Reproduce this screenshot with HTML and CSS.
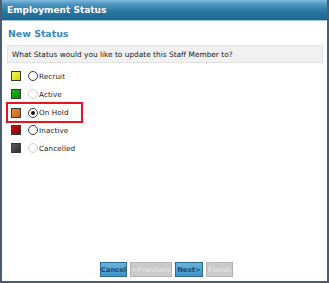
FILE: index.html
```html
<!DOCTYPE html>
<html>
<head>
<meta charset="utf-8">
<link rel="stylesheet" href="styles.css">
</head>
<body>
<div class="window">
  <div class="titlebar">Employment Status</div>
  <div class="content">
    <div class="section-title">New Status</div>
    <div class="question">What Status would you like to update this Staff Member to?</div>
    <div class="options">
      <div class="option">
        <span class="swatch yellow"></span>
        <span class="radio"></span>
        <span class="label">Recruit</span>
      </div>
      <div class="option">
        <span class="swatch green"></span>
        <span class="radio disabled"></span>
        <span class="label">Active</span>
      </div>
      <div class="option highlighted">
        <span class="swatch orange"></span>
        <span class="radio checked"></span>
        <span class="label">On Hold</span>
      </div>
      <div class="option">
        <span class="swatch red"></span>
        <span class="radio"></span>
        <span class="label">Inactive</span>
      </div>
      <div class="option">
        <span class="swatch dark"></span>
        <span class="radio disabled"></span>
        <span class="label">Cancelled</span>
      </div>
    </div>
    <div class="buttons">
      <span class="btn primary btn-cancel">Cancel</span>
      <span class="btn off btn-prev">&lt;Previous</span>
      <span class="btn primary btn-next">Next&gt;</span>
      <span class="btn off btn-finish">Finish</span>
    </div>
  </div>
</div>
</body>
</html>
```

FILE: styles.css
```css
html, body {
  margin: 0;
  padding: 0;
  background: #ffffff;
}

.window {
  width: 329px;
  height: 283px;
  box-sizing: border-box;
  border-left: 2px solid #4c5d70;
  border-right: 2px solid #4c5d70;
  border-bottom: 2px solid #4c5d70;
  display: flex;
  flex-direction: column;
  font-family: "DejaVu Sans", Verdana, sans-serif;
}

.titlebar {
  height: 21px;
  box-sizing: border-box;
  padding: 5px 0 0 5px;
  background: linear-gradient(to bottom, #7fbadc 0%, #4f97c2 20%, #2a78a4 55%, #1c6790 100%);
  border-bottom: 1px solid #9cc6e0;
  color: #ffffff;
  font-weight: bold;
  font-size: 9px;
}

.content {
  flex: 1;
  display: flex;
  flex-direction: column;
  padding: 0 4px 0 5px;
}

.section-title {
  color: #3a88b8;
  font-weight: bold;
  font-size: 9.4px;
  margin-top: 7px;
  padding-left: 1px;
  height: 13px;
}

.question {
  margin-top: 4px;
  height: 18px;
  box-sizing: border-box;
  background: #f1f1f1;
  border: 1px solid #e2e2e2;
  font-size: 7.4px;
  color: #222222;
  padding: 4px 0 0 4px;
}

.options {
  display: flex;
  flex-direction: column;
  margin-top: 4px;
}

.option {
  display: flex;
  align-items: center;
  height: 18px;
  width: 76px;
  box-sizing: border-box;
  border: 2px solid transparent;
  padding-left: 2px;
}

.option.highlighted {
  border-color: #e8141c;
  height: 21px;
  margin: -1px 0 -2px -1px;
  padding-left: 3px;
  width: 77px;
}

.swatch {
  width: 10px;
  height: 10px;
  box-sizing: border-box;
  border: 1px solid #3a3a3a;
  margin-right: 7px;
}

.yellow { background: linear-gradient(135deg, #f4f45a, #d8d800); }
.green { background: linear-gradient(135deg, #20b820, #008a00); }
.orange { background: linear-gradient(135deg, #e88a3c, #c86414); }
.red { background: linear-gradient(135deg, #c01010, #900000); }
.dark { background: linear-gradient(135deg, #5a5a5a, #2c2c2c); }

.radio {
  width: 10px;
  height: 10px;
  box-sizing: border-box;
  border-radius: 50%;
  border: 1px solid #3c3c3c;
  background: #ffffff;
  margin-right: 1px;
  position: relative;
}

.radio.disabled {
  border-color: #d0d0d0;
}

.radio.checked::after {
  content: "";
  position: absolute;
  left: 2px;
  top: 2px;
  width: 4px;
  height: 4px;
  border-radius: 50%;
  background: #111111;
}

.label {
  font-size: 7.2px;
  color: #222222;
  letter-spacing: 0.1px;
}

.buttons {
  margin-top: auto;
  margin-bottom: 4px;
  display: flex;
  justify-content: center;
  gap: 3px;
  padding-left: 3px;
}

.btn {
  height: 15px;
  box-sizing: border-box;
  font-size: 6.8px;
  font-weight: bold;
  display: flex;
  align-items: center;
  justify-content: center;
}

.btn.primary {
  background: linear-gradient(to bottom, #6ab4dc, #3e94c4);
  border: 1px solid #2a6a92;
  color: #1c4c74;
}

.btn.off {
  background: #cacaca;
  border: 1px solid #b4b4b4;
  color: #e0e0e0;
}

.btn-cancel { width: 27px; }
.btn-prev { width: 42px; }
.btn-next { width: 28px; }
.btn-finish { width: 27px; }
```
